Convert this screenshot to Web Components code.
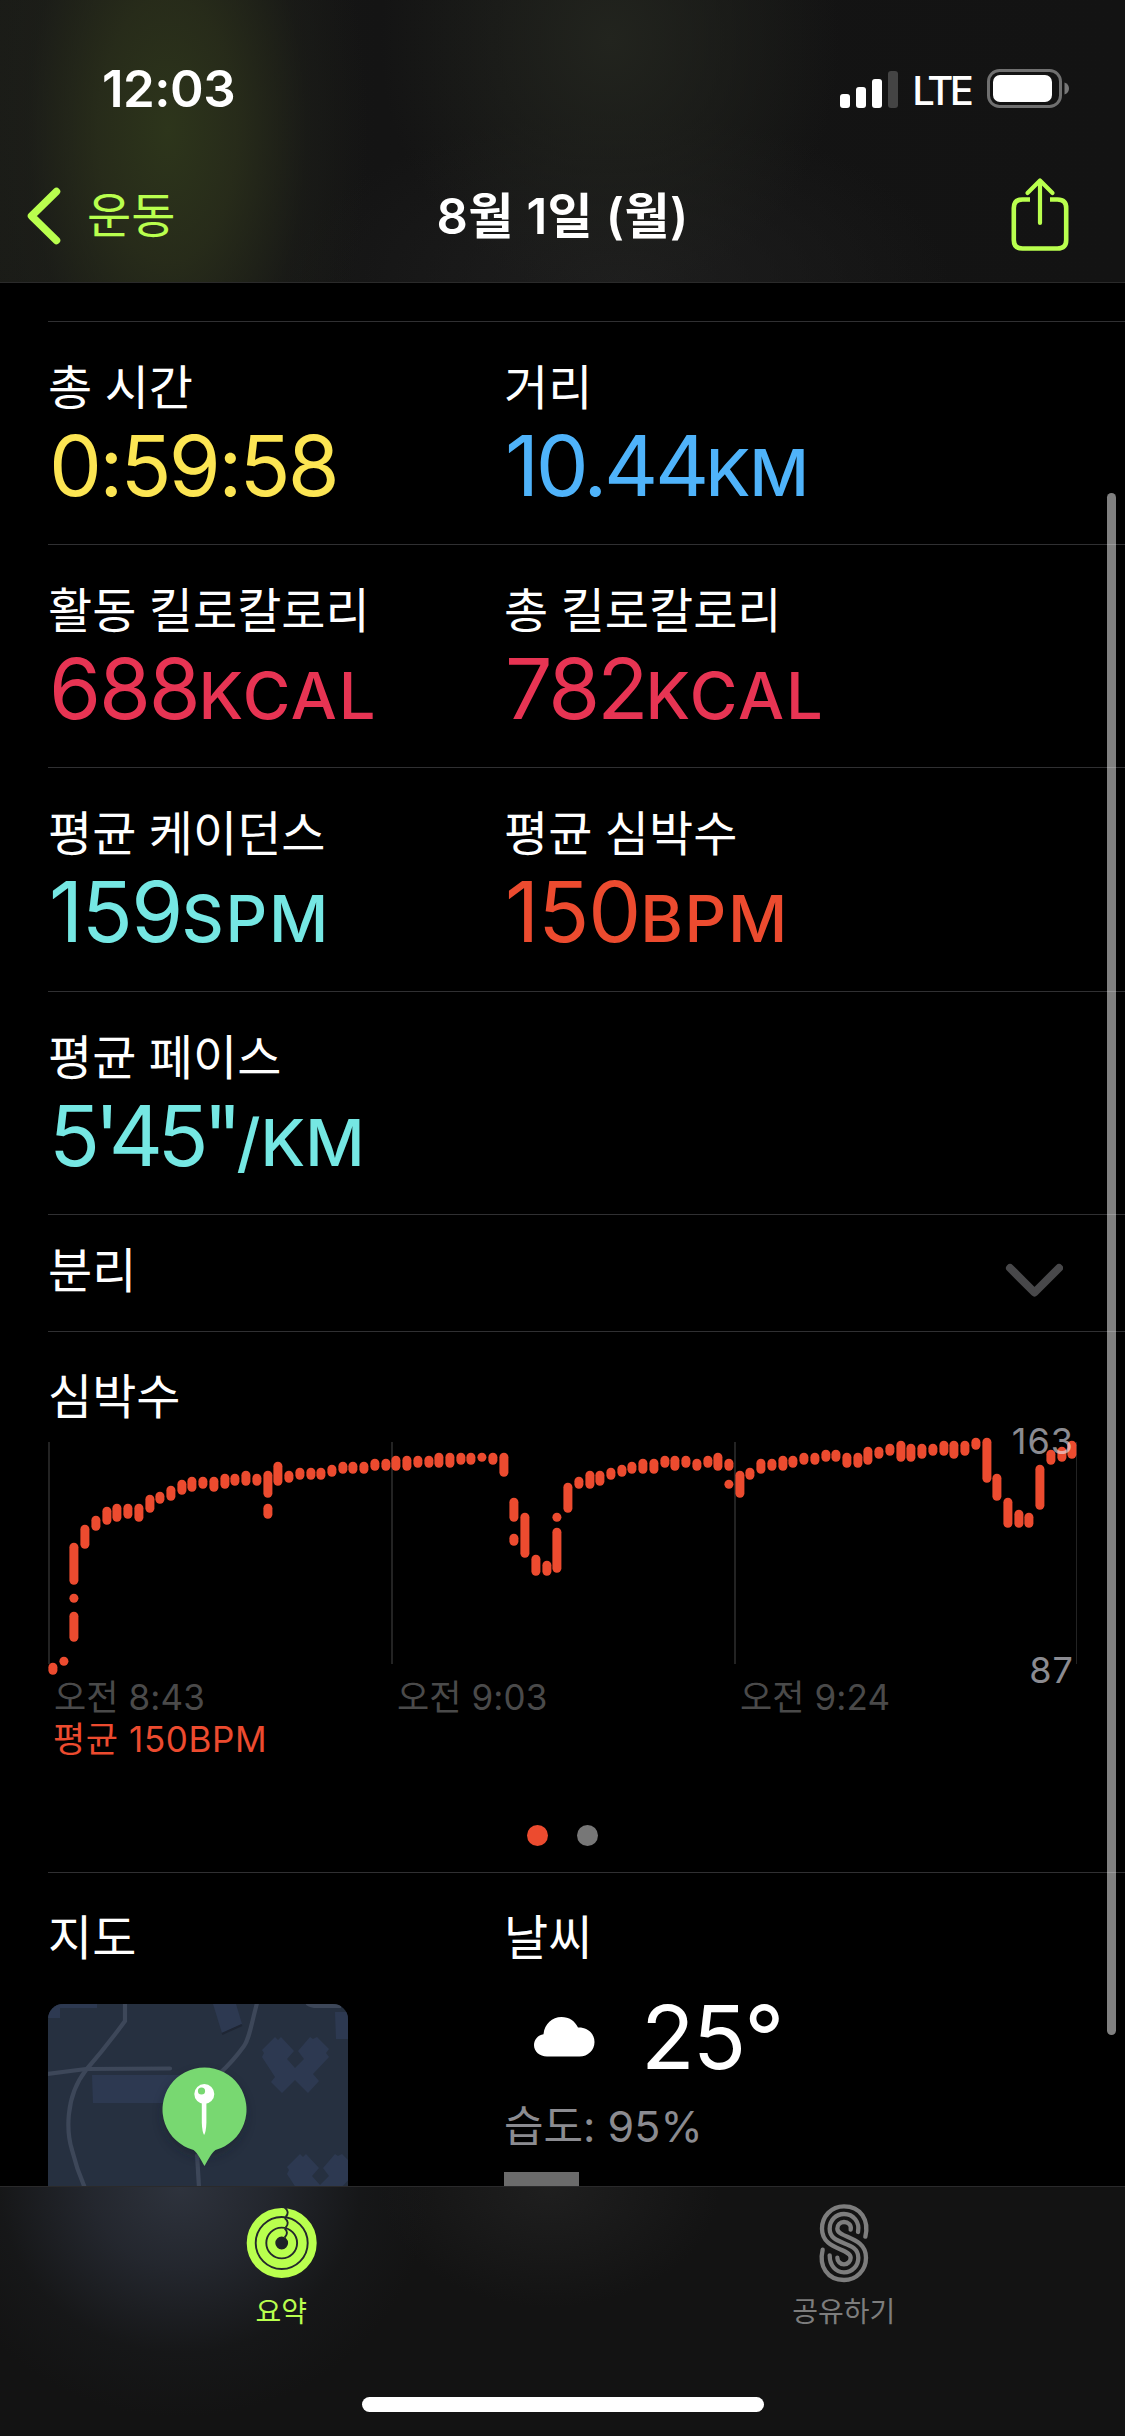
<!DOCTYPE html>
<html lang="ko">
<head>
<meta charset="UTF-8">
<title>8월 1일 (월)</title>
<style>
    html, body {
        margin: 0;
        background: #000;
    }
    body {
        width: 1125px;
        height: 2436px;
        overflow: hidden;
        font-family: Inter, "Noto Sans CJK KR", sans-serif;
        color: #fff;
    }
</style>
</head>
<body>
<workout-app>
    <status-bar slot="header" time="12:03"></status-bar>
    <nav-bar slot="header" back="운동" heading="8월 1일 (월)"></nav-bar>

    <metric-row>
        <metric-cell label="총 시간" value="0:59:58" color="#fce553" spacing="-2.8px"></metric-cell>
        <metric-cell label="거리" value="10.44" unit="KM" color="#4fb3fa" spacing="-3.4px" unit-spacing="-1px"></metric-cell>
    </metric-row>
    <metric-row>
        <metric-cell label="활동 킬로칼로리" value="688" unit="KCAL" color="#e73453" spacing="-2.2px" unit-spacing="1.9px"></metric-cell>
        <metric-cell label="총 킬로칼로리" value="782" unit="KCAL" color="#e73453" spacing="-3px" unit-spacing="1.9px"></metric-cell>
    </metric-row>
    <metric-row style="height: 224px">
        <metric-cell label="평균 케이던스" value="159" unit="SPM" color="#75e7e3" unit-spacing="1.7px"></metric-cell>
        <metric-cell label="평균 심박수" value="150" unit="BPM" color="#ec4b2f" spacing="-1px" unit-spacing="1.7px"></metric-cell>
    </metric-row>
    <metric-row>
        <metric-cell label="평균 페이스" value="5'45&quot;" unit="/KM" color="#75e7e3" spacing="-5.6px" unit-spacing="0"></metric-cell>
    </metric-row>
    <split-row>분리</split-row>
    <heart-chart heading="심박수" average="평균 150BPM"></heart-chart>
    <info-row>
        <map-card heading="지도"></map-card>
        <weather-card heading="날씨" temp="25°" humidity="습도: 95%"></weather-card>
    </info-row>

    <tab-bar slot="footer">
        <tab-item icon="rings" active>요약</tab-item>
        <tab-item icon="sharing">공유하기</tab-item>
    </tab-bar>
</workout-app>

<script>
// Attach an open shadow root and fill it
function paint(el, html) {
    el.attachShadow({ mode: 'open' }).innerHTML = html;
}

// 1. App shell
class WorkoutApp extends HTMLElement {
    connectedCallback() {
        paint(this, `
        <style>
            :host {
                display: flex;
                flex-direction: column;
                position: relative;
                width: 1125px;
                height: 2436px;
                background: #000;
            }
            header {
                box-sizing: border-box;
                height: 283px;
                flex: none;
                border-bottom: 1px solid #2a2a2a;
                background:
                    radial-gradient(ellipse 200px 380px at 168px 130px, #2d351b 0%, #2b301bcc 35%, #1f211a66 70%, transparent 100%),
                    radial-gradient(ellipse 230px 260px at 610px 40px, #22241e 0%, transparent 100%),
                    radial-gradient(ellipse 330px 170px at 620px 283px, #1e1e1e 0%, transparent 100%),
                    linear-gradient(90deg, #1a1b17 0, #141414 380px, #131313 100%);
            }
            main {
                flex: 1;
                min-height: 0;
                overflow: hidden;
                padding: 38px 0 0 48px;
            }
            .scroll {
                position: absolute;
                left: 1107px;
                top: 493px;
                width: 9px;
                height: 1542px;
                border-radius: 5px;
                background: rgba(255, 255, 255, 0.5);
            }
        </style>
        <header><slot name="header"></slot></header>
        <main><slot></slot></main>
        <slot name="footer"></slot>
        <div class="scroll"></div>
        `);
    }
}
customElements.define('workout-app', WorkoutApp);

// 2. Status bar
class StatusBar extends HTMLElement {
    connectedCallback() {
        paint(this, `
        <style>
            :host {
                display: flex;
                justify-content: space-between;
                box-sizing: border-box;
                height: 155px;
                padding: 58px 55px 0 102px;
            }
            .time {
                font-size: 51px;
                font-weight: 600;
                line-height: 62px;
                letter-spacing: -0.5px;
            }
            .right {
                display: flex;
                height: 62px;
                align-items: center;
            }
            .lte {
                font-size: 40px;
                font-weight: 500;
                letter-spacing: -3.8px;
                margin: 2px 17px 0 14px;
            }
            svg { display: block; }
        </style>
        <span class="time">${this.getAttribute('time')}</span>
        <div class="right">
            <svg width="58" height="38" viewBox="0 0 58 38" fill="#fff">
                <rect x="0" y="24" width="10" height="14" rx="3"/>
                <rect x="16" y="17" width="10" height="21" rx="3"/>
                <rect x="32" y="9" width="10" height="29" rx="3"/>
                <rect x="48" y="1" width="10" height="37" rx="3" fill="#444"/>
            </svg>
            <span class="lte">LTE</span>
            <svg width="83" height="40" viewBox="0 0 83 40">
                <rect x="1.5" y="1.5" width="72" height="36" rx="11" fill="none" stroke="#707070" stroke-width="3"/>
                <rect x="6" y="6" width="59" height="27" rx="7" fill="#fff"/>
                <path d="M77.500 13.500c3.300 1.200 4.500 3.500 4.500 6s-1.200 4.800-4.500 6z" fill="#777"/>
            </svg>
        </div>
        `);
    }
}
customElements.define('status-bar', StatusBar);

// 3. Navigation bar
class NavBar extends HTMLElement {
    connectedCallback() {
        paint(this, `
        <style>
            :host {
                display: grid;
                grid-template-columns: 1fr auto 1fr;
                align-items: center;
                height: 122px;
                padding: 0 56px 0 26px;
                color: #b9ff4e;
            }
            .back {
                display: flex;
                align-items: center;
                gap: 26px;
                font-size: 48px;
            }
            .back span { line-height: 58px; margin-top: -1px; }
            h1 {
                margin: 2px 0 0 30px;
                color: #fff;
                font-size: 49px;
                font-weight: 600;
                line-height: 60px;
                letter-spacing: 0.4px;
            }
            .share { justify-self: end; margin-top: -5px; }
            svg { display: block; fill: none; stroke: currentColor; stroke-linecap: round; stroke-linejoin: round; }
        </style>
        <div class="back">
            <svg width="35" height="60" viewBox="0 0 35 60" stroke-width="7.500"><path d="M30.500 5.500 5.500 30l25 24.500"/></svg>
            <span>${this.getAttribute('back')}</span>
        </div>
        <h1>${this.getAttribute('heading')}</h1>
        <svg class="share" width="58" height="74" viewBox="0 0 58 74" stroke-width="4.600">
            <path d="M19 22.500H11.500Q2.800 22.500 2.800 31v32q0 8.500 8.700 8.500h35Q55.200 71.500 55.200 63V31q0-8.500-8.700-8.500H39" stroke-linecap="butt"/>
            <path d="M29 46V4.500M16.500 16 29 3.500 41.500 16" stroke-width="4.200"/>
        </svg>
        `);
    }
}
customElements.define('nav-bar', NavBar);

// 4. Metrics
class MetricRow extends HTMLElement {
    connectedCallback() {
        paint(this, `
        <style>
            :host {
                display: grid;
                grid-template-columns: 456px 1fr;
                box-sizing: border-box;
                height: 223px;
                border-top: 1px solid #303032;
                padding-top: 37px;
            }
        </style>
        <slot></slot>
        `);
    }
}
customElements.define('metric-row', MetricRow);

class MetricCell extends HTMLElement {
    connectedCallback() {
        const unit = this.getAttribute('unit') || '';
        const spacing = this.getAttribute('spacing') || '-1.5px';
        const unitSpacing = this.getAttribute('unit-spacing') || '0.9px';
        paint(this, `
        <style>
            :host { display: block; white-space: nowrap; }
            .label {
                font-size: 48px;
                line-height: 58px;
                word-spacing: -1px;
            }
            .value {
                font-size: 84px;
                line-height: 100px;
                margin-top: -1px;
                padding-left: 1px;
                color: ${this.getAttribute('color')};
                letter-spacing: ${spacing};
            }
            .unit {
                font-size: 65px;
                font-weight: 500;
                line-height: 0;
                letter-spacing: ${unitSpacing};
            }
        </style>
        <div class="label">${this.getAttribute('label')}</div>
        <div class="value">${this.getAttribute('value')}<span class="unit">${unit}</span></div>
        `);
    }
}
customElements.define('metric-cell', MetricCell);

// 5. Collapsed splits row
class SplitRow extends HTMLElement {
    connectedCallback() {
        paint(this, `
        <style>
            :host {
                display: flex;
                justify-content: space-between;
                align-items: center;
                box-sizing: border-box;
                height: 117px;
                border-top: 1px solid #303032;
                padding-right: 62px;
                font-size: 48px;
            }
            span { line-height: 58px; margin-top: -4px; }
            svg { margin-top: 13px; }
        </style>
        <span><slot></slot></span>
        <svg width="58" height="36" viewBox="0 0 58 36" fill="none" stroke="#48484a" stroke-width="8" stroke-linecap="round" stroke-linejoin="round">
            <path d="M5 6 29.500 30.500 54 6"/>
        </svg>
        `);
    }
}
customElements.define('split-row', SplitRow);

// 6. Heart rate chart
// One entry per column: [high, low] pairs in BPM, several when the column is broken
const heartRates = [
    [88, 87], [90, 90], [128, 117, 111, 111, 105, 98], [134, 129], [137, 135], [140, 137],
    [141, 138], [141, 139], [141, 138], [144, 141], [145, 144], [147, 145],
    [149, 147], [150, 148], [150, 149], [150, 148], [151, 149], [151, 150],
    [152, 150], [151, 150], [152, 146, 141, 139], [155, 150], [152, 151], [153, 152],
    [153, 152], [153, 152], [154, 153], [155, 154], [155, 154], [155, 154],
    [156, 155], [156, 155], [157, 155], [157, 155], [157, 156], [157, 156],
    [158, 156], [158, 156], [158, 157], [158, 157], [158, 158], [158, 157],
    [158, 153], [143, 138, 131, 130], [138, 126], [124, 120], [122, 120], [138, 138, 133, 121],
    [148, 141], [150, 149], [152, 149], [152, 150], [153, 152], [154, 153],
    [155, 154], [156, 154], [156, 154], [157, 156], [157, 155], [157, 156],
    [156, 155], [157, 156], [158, 155], [156, 155, 149, 149], [152, 146], [153, 152],
    [156, 154], [156, 155], [157, 155], [157, 156], [158, 157], [158, 157],
    [159, 158], [159, 158], [158, 156], [158, 156], [160, 157], [160, 159],
    [161, 160], [162, 158], [161, 158], [161, 159], [161, 160], [162, 160],
    [162, 159], [162, 160], [163, 162], [163, 151], [151, 145], [143, 136],
    [139, 136], [138, 136], [154, 142], [159, 157], [160, 158], [162, 159]
];

class HeartChart extends HTMLElement {
    connectedCallback() {
        const max = 163;
        const step = 3;
        let bars = '';
        heartRates.forEach((ranges, i) => {
            const x = Math.round(i * 10.73) + 0.4;
            for (let n = 0; n < ranges.length; n += 2) {
                const y = (max - ranges[n]) * step - 0.3;
                const h = (ranges[n] - ranges[n + 1]) * step + 9;
                bars += `<rect x="${x}" y="${y}" width="9" height="${h}" rx="4.5"/>`;
            }
        });

        paint(this, `
        <style>
            :host {
                display: block;
                box-sizing: border-box;
                height: 541px;
                border-top: 1px solid #303032;
                padding-top: 36px;
            }
            .heading { font-size: 48px; line-height: 58px; }
            .plot {
                position: relative;
                width: 1029px;
                height: 238px;
                margin-top: 12px;
            }
            svg { display: block; overflow: visible; }
            .max, .min {
                position: absolute;
                right: 3px;
                font-size: 36px;
                line-height: 44px;
                color: rgba(235, 235, 245, 0.6);
                letter-spacing: 1px;
            }
            .max { top: -19px; }
            .min { bottom: -16px; }
            .times {
                display: grid;
                grid-template-columns: 343px 343px 1fr;
                padding-left: 6px;
                font-size: 35px;
                line-height: 42px;
                letter-spacing: 0.1px;
                color: #4a4a4a;
            }
            .average {
                padding-left: 5px;
                font-size: 35px;
                line-height: 42px;
                letter-spacing: 0.6px;
                color: #ec4b2f;
            }
            .dots {
                display: flex;
                justify-content: center;
                gap: 29px;
                padding-right: 48px;
                margin-top: 65px;
            }
            .dots i {
                width: 21px;
                height: 21px;
                border-radius: 50%;
                background: #777;
            }
            .dots i:first-child { background: #ec4b2f; }
        </style>
        <div class="heading">${this.getAttribute('heading')}</div>
        <div class="plot">
            <svg width="1029" height="238" viewBox="0 0 1029 238">
                <g fill="#232323">
                    <rect x="0" y="4" width="2" height="222"/>
                    <rect x="343" y="4" width="2" height="222"/>
                    <rect x="686" y="4" width="2" height="222"/>
                    <rect x="1028" y="4" width="1" height="222"/>
                </g>
                <g fill="#ec4b2f">${bars}</g>
            </svg>
            <span class="max">163</span>
            <span class="min">87</span>
        </div>
        <div class="times"><span>오전 8:43</span><span>오전 9:03</span><span>오전 9:24</span></div>
        <div class="average">${this.getAttribute('average')}</div>
        <div class="dots"><i></i><i></i></div>
        `);
    }
}
customElements.define('heart-chart', HeartChart);

// 7. Map and weather
class InfoRow extends HTMLElement {
    connectedCallback() {
        paint(this, `
        <style>
            :host {
                display: grid;
                grid-template-columns: 456px 1fr;
                border-top: 1px solid #303032;
                padding-top: 36px;
            }
        </style>
        <slot></slot>
        `);
    }
}
customElements.define('info-row', InfoRow);

class MapCard extends HTMLElement {
    connectedCallback() {
        paint(this, `
        <style>
            :host { display: block; }
            .heading { font-size: 48px; line-height: 58px; }
            svg { display: block; margin-top: 37px; border-radius: 15px; }
        </style>
        <div class="heading">${this.getAttribute('heading')}</div>
        <svg width="300" height="300" viewBox="0 0 300 300">
            <defs>
                <filter id="shade" x="-50%" y="-50%" width="200%" height="200%">
                    <feGaussianBlur stdDeviation="6"/>
                </filter>
                <path id="block" d="M227 33l3 3 3-3 13 14-7 8 8 9 9-9-6-8 12-14 3 2 4-2 12 12-3 4 3 4-16 17 6 7-11 12-13-13-13 13-11-11 4-5-13-20 2-4-2-3z"/>
            </defs>
            <rect width="300" height="300" fill="#263040"/>
            <g fill="#2d3951">
                <path d="M0 0h49v4H12v10H0z"/>
                <path d="m165 0 9 29 20-9-6-20z"/>
                <path d="M287 8h13v27h-12z"/>
                <path d="M44 71h90v28H45z"/>
                <use href="#block"/>
                <use href="#block" x="25" y="117"/>
            </g>
            <path d="m174 30 20-9" stroke="#1f2634" stroke-width="2"/>
            <g fill="none" stroke="#3d4759" stroke-width="4.200">
                <path d="M77-1v18Q58 43 38 66C16 94 19 130 24 146q5 20 13 38"/>
                <path d="M-1 70 38 65l84-.5" stroke-linecap="round"/>
                <path d="M209-1c-7 27-8 36-13 43s-15 19-25 28"/>
                <path d="M149 150l3 50"/>
                <path d="M259-1q4 3 10 3h24"/>
            </g>
            <circle cx="156" cy="111" r="40" fill="#141a26" opacity=".55" filter="url(#shade)"/>
            <path d="M156.500 162c-4-7-7-13-11-16a42 42 0 1 1 22 0c-4 3-7 9-11 16z" fill="#78d871"/>
            <circle cx="156.300" cy="90" r="10" fill="#fff"/>
            <circle cx="153.500" cy="87" r="3.600" fill="#78d871"/>
            <path d="M153.800 98h4.600v21q-.4 9-2.300 12-1.900-3-2.300-12z" fill="#fff"/>
        </svg>
        `);
    }
}
customElements.define('map-card', MapCard);

class WeatherCard extends HTMLElement {
    connectedCallback() {
        paint(this, `
        <style>
            :host { display: block; }
            .heading { font-size: 48px; line-height: 58px; }
            .now {
                display: flex;
                align-items: center;
                gap: 46px;
                height: 106px;
                margin-top: 17px;
                padding-left: 30px;
                font-size: 88px;
                line-height: 106px;
                letter-spacing: -2px;
            }
            .humidity {
                margin-top: 8px;
                font-size: 43px;
                line-height: 56px;
                color: #8b8b90;
            }
            .source {
                width: 75px;
                height: 40px;
                margin-top: 18px;
                background: #6b6b6b;
            }
        </style>
        <div class="heading">${this.getAttribute('heading')}</div>
        <div class="now">
            <svg width="61" height="40" viewBox="0 0 61 40" fill="#fff">
                <path d="M13 39.500C5.500 39.500 0 34.500 0 28.300 0 22.500 4 18.200 9.500 17.300 10.500 7 18 0 27.500 0c7.500 0 13.500 4 16.500 10.600C53.500 10.200 60.500 16.500 60.500 25c0 8.300-6.500 14.500-15 14.500z"/>
            </svg>
            <span>${this.getAttribute('temp')}</span>
        </div>
        <div class="humidity">${this.getAttribute('humidity')}</div>
        <div class="source"></div>
        `);
    }
}
customElements.define('weather-card', WeatherCard);

// 8. Tab bar
class TabBar extends HTMLElement {
    connectedCallback() {
        paint(this, `
        <style>
            :host {
                display: flex;
                flex-direction: column;
                align-items: center;
                justify-content: space-between;
                box-sizing: border-box;
                height: 250px;
                flex: none;
                border-top: 1px solid #2a2a2b;
                padding-bottom: 24px;
                background:
                    radial-gradient(ellipse 250px 230px at 180px 0, #2e333d 0%, #282c35cc 35%, #1b1d2066 72%, transparent 100%),
                    radial-gradient(ellipse 170px 120px at 550px 0, #1f1f1f 0%, transparent 100%),
                    #131313;
            }
            .tabs {
                display: grid;
                grid-template-columns: 1fr 1fr;
                width: 100%;
            }
            .home {
                width: 402px;
                height: 15px;
                border-radius: 8px;
                background: #fff;
            }
        </style>
        <div class="tabs"><slot></slot></div>
        <div class="home"></div>
        `);
    }
}
customElements.define('tab-bar', TabBar);

const tabIcons = {
    rings: `
        <svg width="84" height="84" viewBox="-42.700 -42 84 84" fill="none">
            <circle r="20.700" stroke="currentColor" stroke-width="28.600"/>
            <g stroke="#23272d" stroke-width="1.900">
                <circle r="26"/>
                <circle r="15.400"/>
                <path d="M3-35.500q5.500 4.500 1 9.500"/>
                <path d="M3-25q5.500 4.500 1 9.500"/>
                <path d="M3-14.500q4.500 4 0 9"/>
            </g>
        </svg>`,
    sharing: `
        <svg width="84" height="84" viewBox="64 33 252 252" fill="none" stroke="currentColor" stroke-width="13" stroke-linecap="round">
            <path d="M254 140C266 90 240 49 190 49c-38 0-66 30-66 67 0 65 86 58 86 87 0 11-9 20-20 20s-20-9-20-20"/>
            <path d="M232 126c6-30-14-54-42-54-25 0-43 20-43 44 0 54 86 33 86 87 0 24-18 44-43 44s-43-20-43-51"/>
            <path d="M210 119c3-14-8-23-20-23s-20 9-20 20c0 29 86 22 86 87 0 37-28 67-66 67-50 0-76-41-64-91"/>
        </svg>`
};

class TabItem extends HTMLElement {
    connectedCallback() {
        paint(this, `
        <style>
            :host {
                display: flex;
                flex-direction: column;
                align-items: center;
                padding-top: 14px;
                color: #7d7d7d;
                font-size: 28px;
                line-height: 34px;
            }
            :host([active]) { color: #b9ff4e; }
            span { margin-top: 10px; }
        </style>
        ${tabIcons[this.getAttribute('icon')]}
        <span><slot></slot></span>
        `);
    }
}
customElements.define('tab-item', TabItem);
</script>
</body>
</html>
